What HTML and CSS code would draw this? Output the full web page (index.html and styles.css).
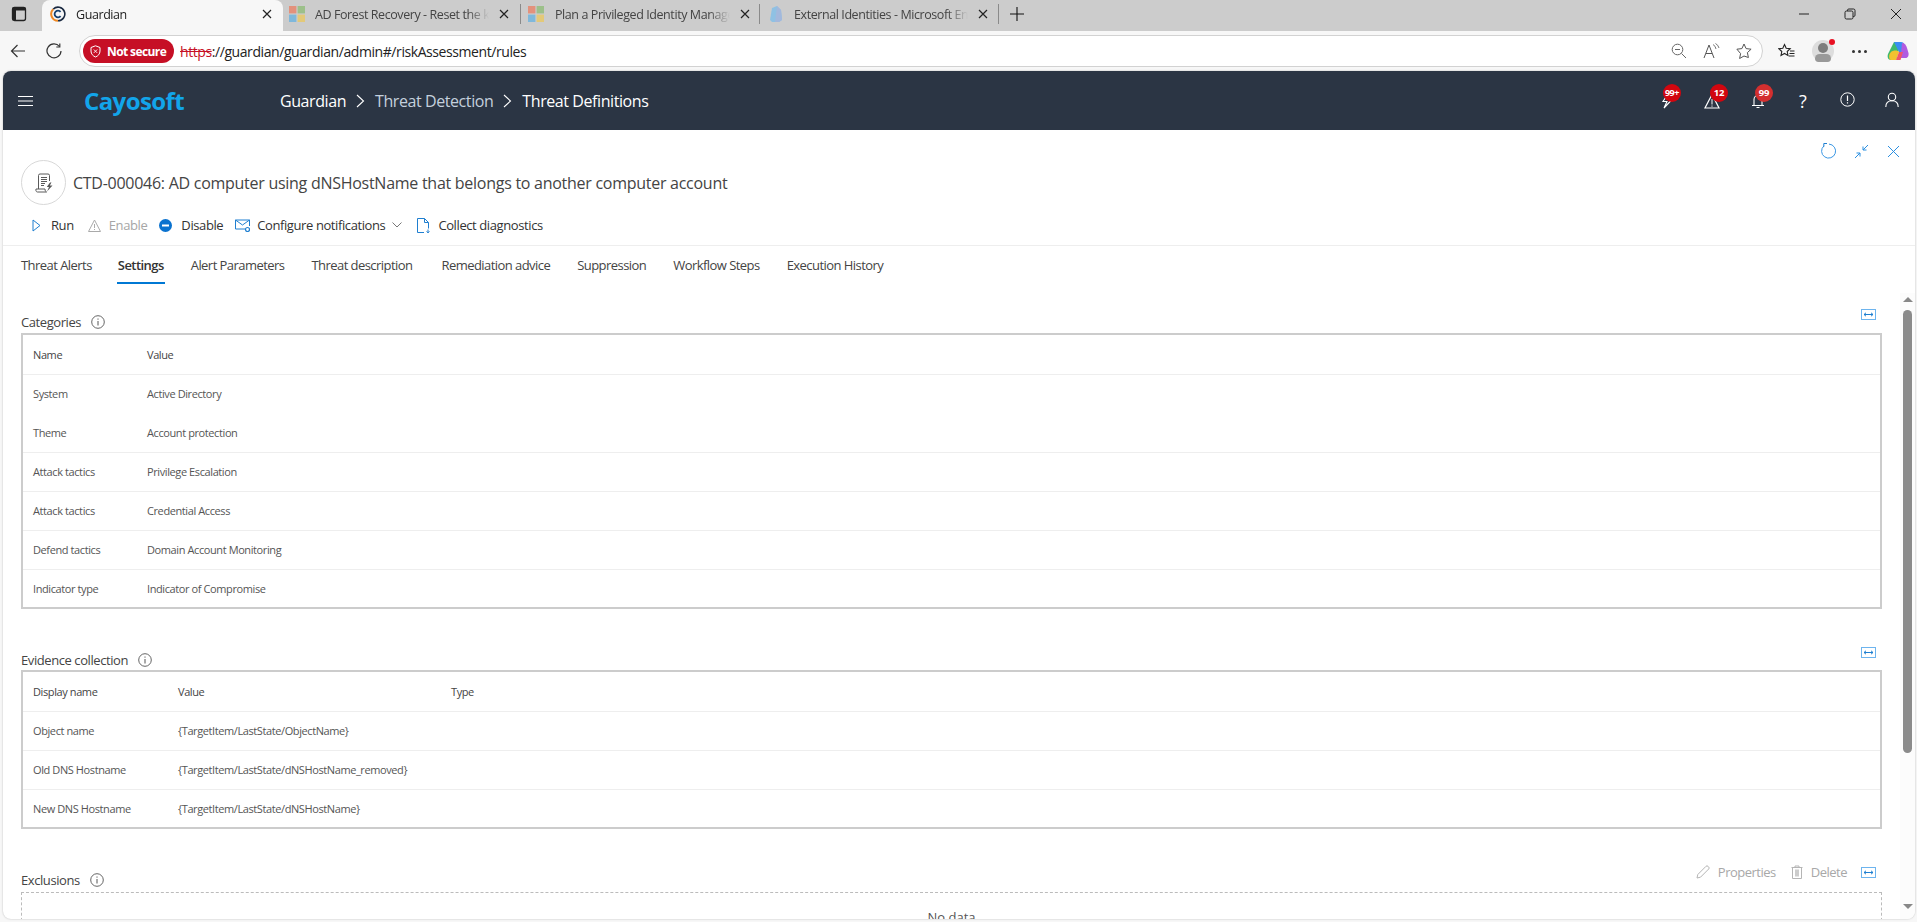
FILE: index.html
```html
<!DOCTYPE html>
<html lang="en">
<head>
<meta charset="utf-8">
<title>Guardian</title>
<link rel="stylesheet" href="styles.css">
</head>
<body>
<div class="tabstrip">
  <div class="winbtn"><svg width="16" height="16" viewBox="0 0 16 16"><rect x="1.500" y="1.500" width="13" height="13" rx="2" fill="none" stroke="#222" stroke-width="1.300"/><rect x="1.500" y="1.500" width="13" height="3" fill="#222"/><rect x="1.500" y="1.500" width="3.500" height="13" fill="#222"/></svg></div>
  <div class="tab active">
    <svg class="fav" width="16" height="16" viewBox="0 0 16 16"><path d="M3.200 3.200A6.800 6.800 0 1 1 8 14.800" fill="none" stroke="#1b2a41" stroke-width="1.600"/><path d="M8 14.800A6.800 6.800 0 0 1 3.200 3.200" fill="none" stroke="#f08a24" stroke-width="2"/><path d="M10.600 5.800A3.400 3.400 0 1 0 10.600 10.200" fill="none" stroke="#16406e" stroke-width="1.800"/></svg>
    <span class="tabtext">Guardian</span>
    <svg class="tabx" width="12" height="12" viewBox="0 0 12 12"><path d="M2 2l8 8M10 2l-8 8" stroke="#222" stroke-width="1.200"/></svg>
  </div>
  <div class="tab t2">
    <svg class="fav" width="16" height="16" viewBox="0 0 16 16"><rect width="7.400" height="7.400" fill="#e3917c"/><rect x="8.600" width="7.400" height="7.400" fill="#9cc08a"/><rect y="8.600" width="7.400" height="7.400" fill="#7fb8db"/><rect x="8.600" y="8.600" width="7.400" height="7.400" fill="#e3c978"/></svg>
    <span class="tabtext">AD Forest Recovery - Reset the krbtgt</span>
    <svg class="tabx" width="12" height="12" viewBox="0 0 12 12"><path d="M2 2l8 8M10 2l-8 8" stroke="#222" stroke-width="1.200"/></svg>
  </div>
  <div class="tab t3">
    <svg class="fav" width="16" height="16" viewBox="0 0 16 16"><rect width="7.400" height="7.400" fill="#e3917c"/><rect x="8.600" width="7.400" height="7.400" fill="#9cc08a"/><rect y="8.600" width="7.400" height="7.400" fill="#7fb8db"/><rect x="8.600" y="8.600" width="7.400" height="7.400" fill="#e3c978"/></svg>
    <span class="tabtext">Plan a Privileged Identity Management</span>
    <svg class="tabx" width="12" height="12" viewBox="0 0 12 12"><path d="M2 2l8 8M10 2l-8 8" stroke="#222" stroke-width="1.200"/></svg>
  </div>
  <div class="tab t4">
    <svg class="fav" width="14" height="16" viewBox="0 0 14 16"><path d="M1 14L3 2 8 0l4 4 1 10-3 2H3z" fill="#8fc1e3"/><path d="M8 0l4 4 1 10-3 2H6z" fill="#a3b8dc"/></svg>
    <span class="tabtext">External Identities - Microsoft Entra</span>
    <svg class="tabx" width="12" height="12" viewBox="0 0 12 12"><path d="M2 2l8 8M10 2l-8 8" stroke="#222" stroke-width="1.200"/></svg>
  </div>
  <svg class="newtab" width="14" height="14" viewBox="0 0 14 14"><path d="M7 0v14M0 7h14" stroke="#111" stroke-width="1.100"/></svg>
  <div class="winctl">
    <svg width="12" height="12" viewBox="0 0 12 12"><path d="M1 6h10" stroke="#222" stroke-width="1"/></svg>
    <svg width="12" height="12" viewBox="0 0 12 12"><rect x="1" y="3" width="8" height="8" rx="1.500" fill="none" stroke="#222"/><path d="M3.500 3V2.300A1.300 1.300 0 0 1 4.800 1H9.500A1.500 1.500 0 0 1 11 2.500V7.200A1.300 1.300 0 0 1 9.700 8.500H9" fill="none" stroke="#222"/></svg>
    <svg width="12" height="12" viewBox="0 0 12 12"><path d="M1 1l10 10M11 1L1 11" stroke="#222" stroke-width="1"/></svg>
  </div>
</div>

<div class="addrbar">
  <svg class="navback" width="16" height="16" viewBox="0 0 16 16"><path d="M15 8H1.500M7.500 2L1.500 8l6 6" fill="none" stroke="#333" stroke-width="1.200"/></svg>
  <svg class="navreload" width="16" height="16" viewBox="0 0 16 16"><path d="M13.500 3.500A7 7 0 1 0 15 8" fill="none" stroke="#333" stroke-width="1.200"/><path d="M13.800 .5v3.500h-3.500" fill="none" stroke="#333" stroke-width="1.200"/></svg>
  <div class="pill">
    <div class="secure">
      <svg width="11" height="13" viewBox="0 0 11 13"><path d="M5.500 .8L10 2.500V6c0 3-2 5-4.500 6C3 11 1 9 1 6V2.500z" fill="none" stroke="#fff" stroke-width="1"/><path d="M3.800 4.500l3.400 3.400M7.200 4.500L3.800 7.900" stroke="#fff" stroke-width=".9"/></svg>
      <span>Not secure</span>
    </div>
    <div class="url"><s>https</s><span class="urlrest">://guardian/guardian/admin#/riskAssessment/rules</span></div>
    <div class="pillicons">
      <svg width="16" height="16" viewBox="0 0 16 16"><circle cx="6.500" cy="6.500" r="5.300" fill="none" stroke="#666"/><path d="M4 6.500h5M10.500 10.500L15 15" stroke="#666" stroke-width="1"/></svg>
      <svg class="readaloud" width="17" height="16" viewBox="0 0 17 16"><path d="M1 15L6 2l5 13M3 10.500h6" fill="none" stroke="#555" stroke-width="1"/><path d="M10 1.500A6 6 0 0 1 13 6M12.500 .5A7 7 0 0 1 16 5" fill="none" stroke="#666" stroke-width=".9"/></svg>
      <svg width="16" height="16" viewBox="0 0 16 16"><path d="M8 1l2.100 4.600 5 .6-3.700 3.400 1 4.900L8 13l-4.400 2.500 1-4.900L.9 6.200l5-.6z" fill="none" stroke="#555" stroke-width="1"/></svg>
    </div>
  </div>
  <div class="addrright">
    <svg class="fav-list" width="17" height="16" viewBox="0 0 17 16"><path d="M6.500 1.500l1.700 3.700 4 .5-3 2.800.8 4-3.500-2-3.500 2 .8-4-3-2.800 4-.5z" fill="none" stroke="#222" stroke-width="1.100"/><path d="M12 8h4.500M11.500 10.500h5M11 13h5.500" stroke="#222" stroke-width="1"/></svg>
    <div class="avatar"><i class="ahead"></i><i class="abody"></i><i class="adot"></i></div>
    <div class="dots"><i></i><i></i><i></i></div>
    <svg class="copilot" width="22" height="22" viewBox="0 0 22 22"><path d="M7 2h7l-5 18H4C1 20 0 17 1 14z" fill="#3fb96d"/><path d="M7 2h7c2 0 3 1 3.500 3L20 12h-8z" fill="#3a8df2"/><path d="M15 3c3 0 4 2 5 5l1.500 5c.5 3-1 5-3 5h-5z" fill="#b05ae0"/><path d="M4 12c2-2 7-2 8 0l-3 8H4C2 20 1 15 4 12z" fill="#f2c230"/><path d="M9 20l3-8h4l-2.500 8z" fill="#f0566a"/></svg>
  </div>
</div>

<div class="app">
  <header class="apphead">
    <svg class="burger" width="15" height="10" viewBox="0 0 15 10"><path d="M0 .5h15M0 5h15M0 9.500h15" stroke="#fff" stroke-width="1"/></svg>
    <div class="logo">Cayosoft</div>
    <nav class="crumbs">
      <span class="cw">Guardian</span>
      <svg width="9" height="14" viewBox="0 0 9 14"><path d="M1 1l6.500 6L1 13" fill="none" stroke="#fff" stroke-width="1.100"/></svg>
      <span class="cm">Threat Detection</span>
      <svg width="9" height="14" viewBox="0 0 9 14"><path d="M1 1l6.500 6L1 13" fill="none" stroke="#fff" stroke-width="1.100"/></svg>
      <span class="cw">Threat Definitions</span>
    </nav>
    <div class="headicons">
      <div class="hi hi1"><svg width="14" height="16" viewBox="0 0 14 16"><path d="M7 1L2 8.500h4L3 15l8-8.500H7L10 1" fill="none" stroke="#fff" stroke-width="1.100"/></svg><b class="badge b1">99+</b></div>
      <div class="hi hi2"><svg width="16" height="16" viewBox="0 0 16 16"><path d="M8 1.500L15 15H1z" fill="none" stroke="#fff" stroke-width="1.200"/><path d="M8 6v5.500M8 12.500v1.200" stroke="#fff" stroke-width="1"/></svg><b class="badge b2">12</b></div>
      <div class="hi hi3"><svg width="14" height="16" viewBox="0 0 14 16"><path d="M3 12V6.500A4 4 0 0 1 11 6.500V12M1 12.500h12M5.500 14.500h3" fill="none" stroke="#fff" stroke-width="1.100"/></svg><b class="badge b3">99</b></div>
      <div class="hi hi4"><span class="qm">?</span></div>
      <div class="hi hi5"><svg width="15" height="15" viewBox="0 0 15 15"><circle cx="7.500" cy="7.500" r="6.700" fill="none" stroke="#fff"/><path d="M7.500 3.500v5.500" stroke="#fff" stroke-width="1.200"/><path d="M7.500 10.200v1.300" stroke="#fff" stroke-width="1.200"/></svg></div>
      <div class="hi hi6"><svg width="14" height="16" viewBox="0 0 14 16"><circle cx="7" cy="5" r="3.700" fill="none" stroke="#fff" stroke-width="1.100"/><path d="M.8 15c0-4 2.500-6.200 6.200-6.200s6.200 2.200 6.200 6.200" fill="none" stroke="#fff" stroke-width="1.100"/></svg></div>
    </div>
  </header>

  <section class="detail">
    <div class="titlezone">
      <div class="cornerbtns">
        <svg width="16" height="16" viewBox="0 0 16 16"><path d="M4 2.800A7 7 0 1 0 9 1.100" fill="none" stroke="#3b97e3" stroke-width="1"/><path d="M7 .5H3.800V3.700" fill="none" stroke="#1f7fd0" stroke-width="1"/></svg>
        <svg width="15" height="15" viewBox="0 0 15 15"><path d="M14 1L9 6M9 2.500V6h3.500M1 14l5-5M2.500 9H6v3.500" fill="none" stroke="#2b8fe0" stroke-width="1"/></svg>
        <svg width="13" height="13" viewBox="0 0 13 13"><path d="M1 1l11 11M12 1L1 12" stroke="#2b8fe0" stroke-width="1"/></svg>
      </div>
      <div class="titlerow">
        <div class="ticon"><svg width="20" height="20" viewBox="0 0 20 20"><path d="M4.500 16V2.500A1.500 1.500 0 0 1 6 1h8a1.500 1.500 0 0 1 1.500 1.500V8M2 16h9c0 1.500.5 2.500 1.500 3H3.500C2.500 19 1.500 18 2 16zM7 4.500h6M7 6.500h6M7 8.500h6M7 10.500h4M7 12.500h3" fill="none" stroke="#5a5a5a" stroke-width="1"/><path d="M16 9.500l-3.200 4.500h2.200L13 18.500l5.500-6h-2.700L17.500 9.500z" fill="#5a5a5a"/></svg></div>
        <h1>CTD-000046: AD computer using dNSHostName that belongs to another computer account</h1>
      </div>
      <div class="actions">
        <span class="act a-run"><svg width="9" height="13" viewBox="0 0 9 13"><path d="M1 1l7 5.500L1 12z" fill="none" stroke="#1f7fd0" stroke-width="1"/></svg>Run</span>
        <span class="act off a-en"><svg width="13" height="13" viewBox="0 0 13 13"><path d="M6.500 1L12.500 12.500H.5z" fill="none" stroke="#aaa" stroke-width="1"/><path d="M6.500 5v4M6.500 10v1" stroke="#aaa"/></svg>Enable</span>
        <span class="act a-dis"><svg width="13" height="13" viewBox="0 0 13 13"><circle cx="6.500" cy="6.500" r="6.500" fill="#0a72cf"/><rect x="3" y="5.500" width="7" height="2" fill="#fff"/></svg>Disable</span>
        <span class="act a-conf"><svg width="15" height="13" viewBox="0 0 15 13"><path d="M10 10H.5V1h14v6M.5 1l7 5 7-5" fill="none" stroke="#1f7fd0" stroke-width="1"/><circle cx="12.500" cy="10.500" r="2" fill="none" stroke="#1f7fd0" stroke-width="1.200"/></svg>Configure notifications<svg class="chev" width="10" height="6" viewBox="0 0 10 6"><path d="M.5.500L5 5 9.500.5" fill="none" stroke="#777"/></svg></span>
        <span class="act a-coll"><svg width="13" height="15" viewBox="0 0 13 15"><path d="M7 14.500H.5V.5h7l4 4v6M7.500.5v4h4" fill="none" stroke="#1f7fd0" stroke-width="1"/><path d="M11 11.500v3M9.500 13.500l1.500 1.300 1.500-1.300" fill="none" stroke="#1f7fd0"/></svg>Collect diagnostics</span>
      </div>
    </div>
    <nav class="tabs">
      <span>Threat Alerts</span>
      <span class="sel">Settings</span>
      <span>Alert Parameters</span>
      <span>Threat description</span>
      <span class="rem">Remediation advice</span>
      <span>Suppression</span>
      <span>Workflow Steps</span>
      <span>Execution History</span>
    </nav>
    <div class="scrollwrap">
      <div class="sections">
        <div class="sechead cat">
          <h2>Categories</h2>
          <svg class="info" width="14" height="14" viewBox="0 0 14 14"><circle cx="7" cy="7" r="6.300" fill="none" stroke="#555" stroke-width=".9"/><path d="M7 6v4.500M7 3.500v1.200" stroke="#555"/></svg>
          <div class="sectools"><svg class="fit" width="15" height="11" viewBox="0 0 15 11"><rect x=".5" y=".5" width="14" height="10" fill="none" stroke="#6db4ee"/><path d="M3 5.500h9M5 3.800L3 5.500l2 1.700M10 3.800l2 1.700-2 1.700" fill="none" stroke="#1f7fd0"/></svg></div>
        </div>
        <table class="grid cats">
          <thead><tr><th>Name</th><th>Value</th></tr></thead>
          <tbody>
            <tr class="nl"><td>System</td><td>Active Directory</td></tr>
            <tr><td>Theme</td><td>Account protection</td></tr>
            <tr><td>Attack tactics</td><td>Privilege Escalation</td></tr>
            <tr><td>Attack tactics</td><td>Credential Access</td></tr>
            <tr><td>Defend tactics</td><td>Domain Account Monitoring</td></tr>
            <tr><td>Indicator type</td><td>Indicator of Compromise</td></tr>
          </tbody>
        </table>
        <div class="sechead ev">
          <h2>Evidence collection</h2>
          <svg class="info" width="14" height="14" viewBox="0 0 14 14"><circle cx="7" cy="7" r="6.300" fill="none" stroke="#555" stroke-width=".9"/><path d="M7 6v4.500M7 3.500v1.200" stroke="#555"/></svg>
          <div class="sectools"><svg class="fit" width="15" height="11" viewBox="0 0 15 11"><rect x=".5" y=".5" width="14" height="10" fill="none" stroke="#6db4ee"/><path d="M3 5.500h9M5 3.800L3 5.500l2 1.700M10 3.800l2 1.700-2 1.700" fill="none" stroke="#1f7fd0"/></svg></div>
        </div>
        <table class="grid evs">
          <thead><tr><th>Display name</th><th>Value</th><th>Type</th></tr></thead>
          <tbody>
            <tr><td>Object name</td><td>{TargetItem/LastState/ObjectName}</td><td></td></tr>
            <tr><td>Old DNS Hostname</td><td>{TargetItem/LastState/dNSHostName_removed}</td><td></td></tr>
            <tr><td>New DNS Hostname</td><td>{TargetItem/LastState/dNSHostName}</td><td></td></tr>
          </tbody>
        </table>
        <div class="sechead ex">
          <h2>Exclusions</h2>
          <svg class="info" width="14" height="14" viewBox="0 0 14 14"><circle cx="7" cy="7" r="6.300" fill="none" stroke="#555" stroke-width=".9"/><path d="M7 6v4.500M7 3.500v1.200" stroke="#555"/></svg>
          <div class="sectools">
            <span class="tool"><svg width="14" height="14" viewBox="0 0 14 14"><path d="M1 13l.8-3.500L10 1.300a1.400 1.400 0 0 1 2 0l.7.700a1.400 1.400 0 0 1 0 2L4.500 12.200z" fill="none" stroke="#b5b5b5"/></svg>Properties</span>
            <span class="tool"><svg width="12" height="14" viewBox="0 0 12 14"><path d="M.5 2.500h11M4 2.500V1h4v1.500M1.500 2.500V13.500h9V2.500" fill="none" stroke="#b5b5b5"/><rect x="4" y="4.500" width="4" height="7" fill="#ccc"/></svg>Delete</span>
            <svg class="fit" width="15" height="11" viewBox="0 0 15 11"><rect x=".5" y=".5" width="14" height="10" fill="none" stroke="#6db4ee"/><path d="M3 5.500h9M5 3.800L3 5.500l2 1.700M10 3.800l2 1.700-2 1.700" fill="none" stroke="#1f7fd0"/></svg>
          </div>
        </div>
        <div class="nodata">No data</div>
      </div>
      <div class="vscroll">
        <i class="up"></i>
        <div class="track"><div class="thumb"></div></div>
        <i class="down"></i>
      </div>
    </div>
  </section>
</div>
</body>
</html>
```

FILE: styles.css
```css
* { box-sizing: border-box; }
html, body { margin: 0; padding: 0; height: 922px; overflow: hidden; background: #f7f7f7; }
body { font-family: "Open Sans", "Noto Sans", sans-serif; color: #333; width: 1917px; }
h1, h2 { margin: 0; font-weight: 400; }
svg { display: block; flex: none; }

.tabstrip { height: 31px; background: #ccc; display: flex; align-items: flex-start; font-size: 12.5px; letter-spacing: -.42px; }
.winbtn { width: 42px; padding: 6px 0 0 11px; }
.tab { height: 20px; margin-top: 4px; display: flex; align-items: center; color: #444; }
.tab .tabtext { white-space: nowrap; overflow: hidden; flex: 1; -webkit-mask-image: linear-gradient(90deg, #000 88%, transparent); mask-image: linear-gradient(90deg, #000 88%, transparent); }
.tab .tabx { margin-left: 9px; }
.tab.active { width: 241px; height: 31px; margin-top: 0; background: #f7f7f7; border-radius: 8px 8px 0 0; padding: 0 10px 3px 8px; color: #222; }
.tab.active .fav { margin-right: 10px; }
.t2 { width: 238px; padding: 0 10px 0 6px; border-right: 1px solid #8a8a8a; }
.t2 .fav { margin-right: 10px; }
.t3 { width: 239px; padding: 0 8px 0 7px; border-right: 1px solid #8a8a8a; }
.t3 .fav { margin-right: 11px; }
.t4 { width: 239px; padding: 0 9px 0 9px; border-right: 1px solid #8a8a8a; }
.t4 .fav { margin-right: 11px; }
.newtab { margin: 7px 0 0 11px; }
.winctl { margin: 8px 0 0 auto; display: flex; gap: 34px; padding-right: 15px; }

.addrbar { height: 40px; display: flex; align-items: center; background: #f7f7f7; }
.navback { margin-left: 10px; }
.navreload { margin-left: 20px; }
.pill { margin-left: 17px; width: 1684px; height: 32px; background: #fff; border: 1px solid #d2d2d2; border-radius: 16px; display: flex; align-items: center; padding-left: 3px; }
.secure { width: 91px; height: 24px; background: #c60f25; border-radius: 12px; color: #fff; font-weight: 700; font-size: 12px; letter-spacing: -.6px; display: flex; align-items: center; gap: 6px; padding-left: 7px; }
.url { margin-left: 6px; font-size: 14px; letter-spacing: -.42px; color: #222; white-space: nowrap; }
.url s { color: #c60f25; }
.urlrest { color: #222; }
.pillicons { margin-left: auto; display: flex; gap: 16px; align-items: center; padding-right: 10px; }
.addrright { display: flex; align-items: center; margin-left: 15px; }
.avatar { width: 22px; height: 22px; border-radius: 50%; background: #ddd; position: relative; margin-left: 17px; }
.ahead { position: absolute; left: 6px; top: 3px; width: 10px; height: 10px; border-radius: 50%; background: #7d7d7d; }
.abody { position: absolute; left: 3px; top: 14px; width: 16px; height: 8px; border-radius: 8px 8px 6px 6px; background: #999; }
.adot { position: absolute; right: -1px; top: -1px; width: 6px; height: 6px; border-radius: 50%; background: #e81123; }
.dots { display: flex; gap: 3px; margin-left: 18px; }
.dots i { width: 3px; height: 3px; background: #333; border-radius: 50%; }
.copilot { margin-left: 20px; }

.app { margin: 0 2px 0 3px; height: 848px; border-radius: 8px; background: #fff; box-shadow: 0 0 2px rgba(0,0,0,.25); overflow: hidden; display: flex; flex-direction: column; }
.apphead { height: 59px; background: #2b3544; display: flex; align-items: center; flex: none; color: #fff; }
.burger { margin-left: 15px; }
.logo { margin-left: 51px; color: #12a5ea; font-weight: 700; font-size: 24px; letter-spacing: -.6px; width: 196px; }
.crumbs { display: flex; align-items: center; font-size: 16px; letter-spacing: -.42px; gap: 10px; }
.cw { color: #fff; }
.cm { color: #c4d0dd; }
.headicons { margin-left: auto; height: 59px; position: relative; width: 256px; }
.hi { position: absolute; height: 18px; }
.hi1 { left: 2px; top: 22px; }
.hi2 { left: 45px; top: 22px; }
.hi3 { left: 92px; top: 22px; }
.hi4 { left: 140px; top: 19px; }
.hi5 { left: 181px; top: 21px; }
.hi6 { left: 226px; top: 21px; }
.qm { font-size: 18px; line-height: 22px; color: #fff; }
.badge { position: absolute; top: -9px; height: 18px; background: #d2060f; color: #fff; font-size: 9.500px; line-height: 18px; text-align: center; border-radius: 9px; font-weight: 700; letter-spacing: -.3px; }
.b1 { left: 2px; width: 18px; font-size: 9px; letter-spacing: -.4px; }
.b2 { left: 6px; width: 18px; }
.b3 { left: 4px; width: 18px; background: #d32f2f; }

.detail { flex: 1; min-height: 0; display: flex; flex-direction: column; position: relative; }
.titlezone { height: 116px; border-bottom: 1px solid #eee; padding: 30px 0 0 18px; position: relative; flex: none; }
.cornerbtns { position: absolute; right: 0; top: 13px; display: flex; align-items: center; gap: 18px; padding-right: 15px; }
.titlerow { display: flex; align-items: center; height: 45px; }
.ticon { width: 45px; height: 45px; border: 1px solid #d8d8d8; border-radius: 50%; display: flex; align-items: center; justify-content: center; }
h1 { margin-left: 7px; font-size: 16px; letter-spacing: -.27px; color: #444; white-space: nowrap; }
.actions { display: flex; align-items: center; height: 20px; margin-top: 10px; font-size: 13px; letter-spacing: -.4px; color: #333; }
.act { display: flex; align-items: center; white-space: nowrap; }
.off { color: #a6a6a6; }
.a-run { margin-left: 11px; }
.a-run svg { margin-right: 10px; }
.a-en { margin-left: 14px; }
.a-en svg { margin-right: 8px; }
.a-dis { margin-left: 12px; }
.a-dis svg { margin-right: 9px; }
.a-conf { margin-left: 12px; }
.a-conf > svg:first-child { margin-right: 7px; }
.chev { margin-left: 7px; }
.a-coll { margin-left: 15px; }
.a-coll svg { margin-right: 8px; }

.tabs { height: 38px; display: flex; gap: 27px; padding-left: 18px; font-size: 13px; letter-spacing: -.55px; color: #444; flex: none; }
.tabs span { display: block; line-height: 39px; height: 38px; }
.tabs .sel { color: #333; font-weight: 600; border-bottom: 2px solid #0078d4; padding: 0 1px; margin: 0 -1px 0 -2px; }
.tabs .rem { margin-left: 2px; }

.scrollwrap { flex: 1; min-height: 0; display: flex; position: relative; }
.sections { flex: 1; padding-left: 18px; overflow: hidden; min-width: 0; }
.sechead { display: flex; align-items: center; width: 1861px; height: 20px; position: relative; font-size: 13px; letter-spacing: -.5px; }
.sechead h2 { font-size: 13px; font-weight: 500; color: #444; letter-spacing: -.42px; }
.info { margin-left: 10px; }
.sectools { position: absolute; right: 6px; top: -8px; height: 20px; display: flex; align-items: center; gap: 10px; }
.cat { margin-top: 28px; }
.ev { margin-top: 41px; }
.ex { margin-top: 41px; }
.grid { width: 1861px; border-collapse: collapse; table-layout: fixed; border: 2px solid #ccc; font-size: 11px; letter-spacing: -.4px; color: #555; }
.cats { margin-top: 1px; }
.grid th { font-weight: 500; text-align: left; color: #444; height: 40px; padding: 0 0 0 10px; }
.grid td { height: 39px; padding: 0 0 0 10px; border-top: 1px solid #eee; }
.grid .nl + tr td { border-top: 0; }
.cats th:first-child { width: 115px; }
.evs th:first-child { width: 146px; }
.evs th:nth-child(2) { width: 273px; }
.tool { display: flex; align-items: center; gap: 8px; color: #a8a8a8; margin-right: 5px; }
.fit { margin-left: -1px; }
.sectools .fit:first-child { margin-left: 0; }
.nodata { width: 1861px; height: 60px; margin-top: 2px; border: 1px dashed #bbb; text-align: center; font-size: 13px; padding-top: 15px; color: #555; }

.vscroll { width: 15px; display: flex; flex-direction: column; align-items: center; background: #fcfcfc; margin-top: 9px; margin-left: 17px; }
.up { display: block; width: 0; height: 0; border: 5px solid transparent; border-top: 0; border-bottom: 5px solid #888; margin-top: 4px; }
.track { flex: 1; width: 9px; padding-top: 8px; }
.thumb { width: 9px; height: 443px; border-radius: 5px; background: #8b8b8b; }
.down { display: block; width: 0; height: 0; border: 5px solid transparent; border-bottom: 0; border-top: 5px solid #888; margin-bottom: 10px; }
```
